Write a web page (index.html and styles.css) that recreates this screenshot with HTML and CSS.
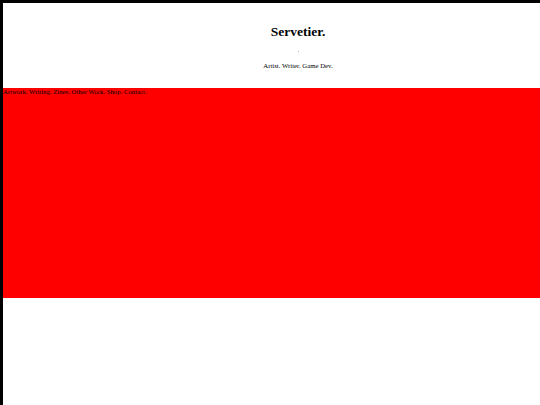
FILE: index.html
```html
<!DOCTYPE html>
<html>
<head>
<meta charset="utf-8">
<link rel="stylesheet" href="styles.css">
</head>
<body>
<div class="page">
  <header class="header">
    <h1 class="title">Servetier.</h1>
    <div class="dot"></div>
    <p class="tagline">Artist. Writer. Game Dev.</p>
  </header>
  <section class="band">
    <nav class="nav">Artwork. Writing. Zines. Other Work. Shop. Contact.</nav>
  </section>
</div>
</body>
</html>
```
FILE: styles.css
```css
html, body {
  margin: 0;
  padding: 0;
  background: #fff;
}
body {
  font-family: "Liberation Serif", "Times New Roman", serif;
  font-size: 6.75px;
  color: #000;
  border-top: 3px solid #000;
  border-left: 3px solid #000;
  min-height: 402px;
}
.header {
  height: 85px;
  padding-left: 53px;
  text-align: center;
  display: flex;
  flex-direction: column;
  align-items: center;
}
.title {
  font-size: 13.5px;
  font-weight: bold;
  margin: 22px 0 0;
  line-height: 1;
}
.dot {
  width: 1px;
  height: 1px;
  background: #bbb;
  margin-top: 12px;
}
.tagline {
  margin: 11px 0 0;
  line-height: 1;
}
.band {
  background: #ff0000;
  height: 210px;
}
.nav {
  line-height: 7px;
}
```
